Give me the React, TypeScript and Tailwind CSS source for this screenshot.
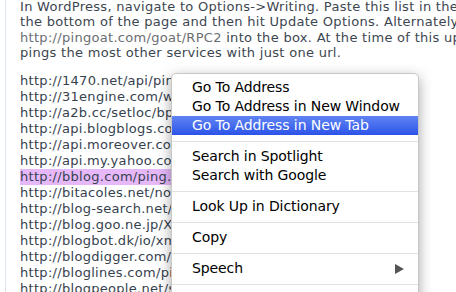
const urls = [
  "http://1470.net/api/ping",
  "http://31engine.com/weblogUpdates",
  "http://a2b.cc/setloc/bp.a2b",
  "http://api.blogblogs.com.br/ping",
  "http://api.moreover.com/RPC2",
  "http://api.my.yahoo.com/RPC2",
  "http://bblog.com/ping.php",
  "http://bitacoles.net/notificacio.php",
  "http://blog-search.net/ping",
  "http://blog.goo.ne.jp/XMLRPC",
  "http://blogbot.dk/io/xml-rpc.php",
  "http://blogdigger.com/RPC2",
  "http://bloglines.com/ping",
  "http://blogpeople.net/servlet/weblogUpdates",
];

type Entry = { label: string; active?: boolean; submenu?: boolean } | "sep";

const menu: Entry[] = [
  { label: "Go To Address" },
  { label: "Go To Address in New Window" },
  { label: "Go To Address in New Tab", active: true },
  "sep",
  { label: "Search in Spotlight" },
  { label: "Search with Google" },
  "sep",
  { label: "Look Up in Dictionary" },
  "sep",
  { label: "Copy" },
  "sep",
  { label: "Speech", submenu: true },
  "sep",
  { label: "Inspect Element" },
];

export default function App() {
  return (
    <div className="relative w-[456px] h-[292px] overflow-hidden bg-white">
      <div className="flex h-full">
        <div className="w-[5px] shrink-0" />
        <div className="w-px shrink-0 bg-[#dde6ee]" />
        <div
          className="pl-[14px] text-[13px] tracking-[0.3px] text-[#3c4650] whitespace-nowrap"
          style={{ fontFamily: '"DejaVu Sans", Verdana, sans-serif' }}
        >
          <p className="leading-[15.3px] -mt-[1px]">
            In WordPress, navigate to Options-&gt;Writing. Paste this list in the
            <br />
            the bottom of the page and then hit Update Options. Alternately, y
            <br />
            <span className="text-[#6a6e72]">http://pingoat.com/goat/RPC2</span> into the box. At the time of this up
            <br />
            pings the most other services with just one url.
          </p>
          <ul className="mt-[13px] leading-[16px] text-[#36424e]">
            {urls.map((u, i) => (
              <li key={i} className={i === 6 ? "bg-[#e6b8fa] w-fit" : ""}>
                {u}
              </li>
            ))}
          </ul>
        </div>
      </div>

      {/* context menu */}
      <div
        className="absolute left-[171px] top-[73px] w-[248px] h-[240px] bg-white rounded-[5px] pt-[4px] border border-[#c8c8c8] shadow-[0_4px_14px_rgba(0,0,0,0.35)] text-[14px] text-black"
        style={{ fontFamily: '"DejaVu Sans", "Lucida Grande", sans-serif' }}
      >
        {menu.map((m, i) =>
          m === "sep" ? (
            <div key={i} className="h-[12px] flex items-center">
              <div className="w-full h-px bg-[#e2e2e2]" />
            </div>
          ) : (
            <div
              key={i}
              className={
                "h-[19px] flex items-center pl-[20px] pr-[14px] tracking-[-0.1px] " +
                (m.active
                  ? "bg-gradient-to-b from-[#6184f3] to-[#2c52e8] text-white"
                  : "")
              }
            >
              <span className="flex-1">{m.label}</span>
              {m.submenu && (
                <svg width="9" height="10" viewBox="0 0 9 10">
                  <path d="M0 0 L9 5 L0 10 Z" fill="#555" />
                </svg>
              )}
            </div>
          )
        )}
      </div>
    </div>
  );
}
